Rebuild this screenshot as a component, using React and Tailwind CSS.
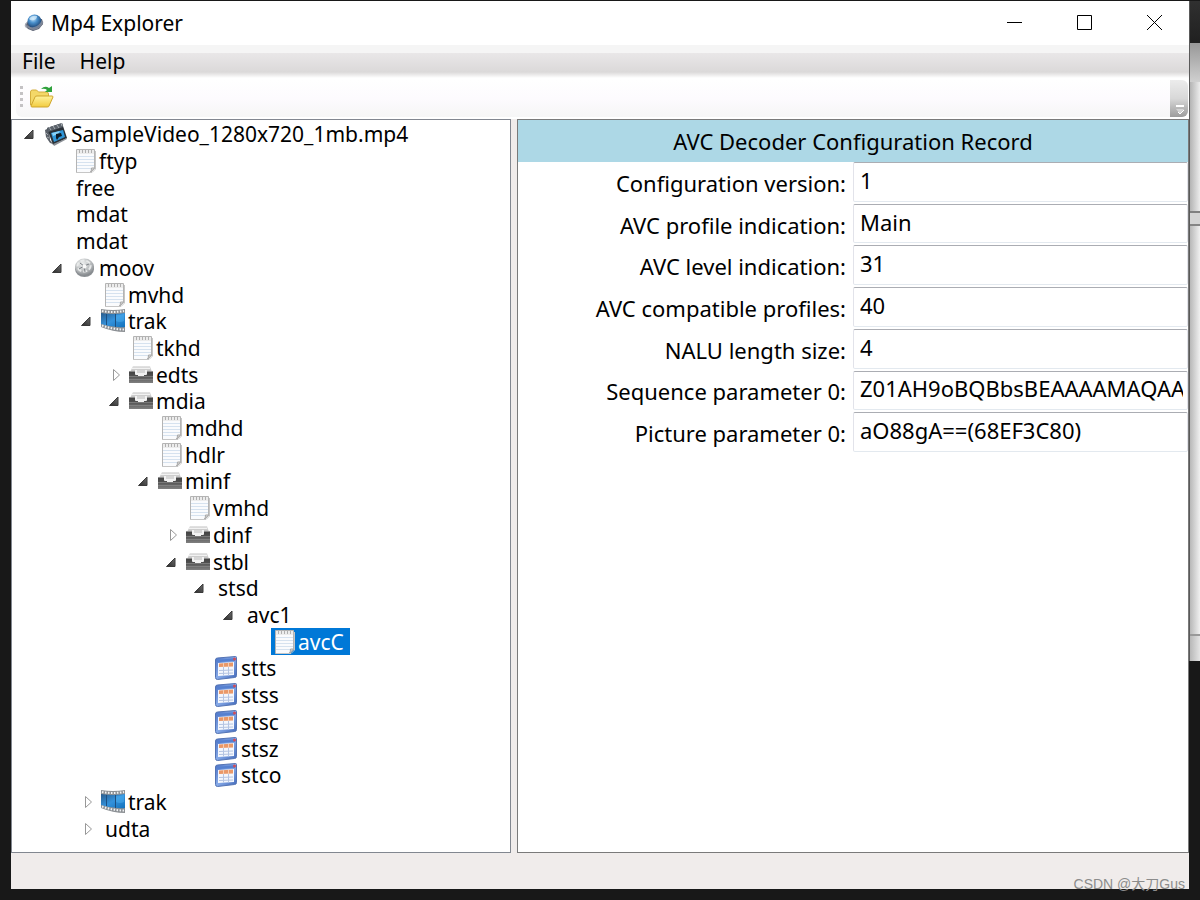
import { useState } from 'react';

const NODES = [
  { id: 'root', label: 'SampleVideo_1280x720_1mb.mp4', depth: 0, icon: 'clip', kids: true, open: true },
  { id: 'ftyp', label: 'ftyp', depth: 1, icon: 'note' },
  { id: 'free', label: 'free', depth: 1 },
  { id: 'mdat1', label: 'mdat', depth: 1 },
  { id: 'mdat2', label: 'mdat', depth: 1 },
  { id: 'moov', label: 'moov', depth: 1, icon: 'reel', kids: true, open: true },
  { id: 'mvhd', label: 'mvhd', depth: 2, icon: 'note' },
  { id: 'trak1', label: 'trak', depth: 2, icon: 'film', kids: true, open: true },
  { id: 'tkhd', label: 'tkhd', depth: 3, icon: 'note' },
  { id: 'edts', label: 'edts', depth: 3, icon: 'drawer', kids: true },
  { id: 'mdia', label: 'mdia', depth: 3, icon: 'drawer', kids: true, open: true },
  { id: 'mdhd', label: 'mdhd', depth: 4, icon: 'note' },
  { id: 'hdlr', label: 'hdlr', depth: 4, icon: 'note' },
  { id: 'minf', label: 'minf', depth: 4, icon: 'drawer', kids: true, open: true },
  { id: 'vmhd', label: 'vmhd', depth: 5, icon: 'note' },
  { id: 'dinf', label: 'dinf', depth: 5, icon: 'drawer', kids: true },
  { id: 'stbl', label: 'stbl', depth: 5, icon: 'drawer', kids: true, open: true },
  { id: 'stsd', label: 'stsd', depth: 6, kids: true, open: true },
  { id: 'avc1', label: 'avc1', depth: 7, kids: true, open: true },
  { id: 'avcC', label: 'avcC', depth: 8, icon: 'note' },
  { id: 'stts', label: 'stts', depth: 6, icon: 'table' },
  { id: 'stss', label: 'stss', depth: 6, icon: 'table' },
  { id: 'stsc', label: 'stsc', depth: 6, icon: 'table' },
  { id: 'stsz', label: 'stsz', depth: 6, icon: 'table' },
  { id: 'stco', label: 'stco', depth: 6, icon: 'table' },
  { id: 'trak2', label: 'trak', depth: 2, icon: 'film', kids: true },
  { id: 'udta', label: 'udta', depth: 2, kids: true },
];

const FIELDS = [
  { id: 'version', label: 'Configuration version:', value: '1' },
  { id: 'profile', label: 'AVC profile indication:', value: 'Main' },
  { id: 'level', label: 'AVC level indication:', value: '31' },
  { id: 'compat', label: 'AVC compatible profiles:', value: '40' },
  { id: 'nalu', label: 'NALU length size:', value: '4' },
  { id: 'sps', label: 'Sequence parameter 0:', value: 'Z01AH9oBQBbsBEAAAAMAQAAADIDxYuS' },
  { id: 'pps', label: 'Picture parameter 0:', value: 'aO88gA==(68EF3C80)' },
];

// gradients shared by all the icons
function IconDefs() {
  return (
    <svg className="absolute w-0 h-0" aria-hidden="true">
      <defs>
        <linearGradient id="gToggle" x1="0" y1="1" x2="1" y2="0">
          <stop offset="0" stopColor="#2c2c2c" /><stop offset="1" stopColor="#6c6c6c" />
        </linearGradient>
        <linearGradient id="gFilm" x1="0" y1="0" x2="1" y2="1">
          <stop offset="0" stopColor="#2a5c8c" /><stop offset="0.5" stopColor="#3492dc" /><stop offset="1" stopColor="#1272bc" />
        </linearGradient>
        <linearGradient id="gDrawer" x1="0" y1="0" x2="0" y2="1">
          <stop offset="0" stopColor="#404040" /><stop offset="0.4" stopColor="#505050" /><stop offset="1" stopColor="#808080" />
        </linearGradient>
        <linearGradient id="gPaper" x1="0" y1="0" x2="0" y2="1">
          <stop offset="0" stopColor="#e4e4e4" /><stop offset="1" stopColor="#bcbcbc" />
        </linearGradient>
        <linearGradient id="gTable" x1="0" y1="0" x2="1" y2="1">
          <stop offset="0" stopColor="#4a70c4" /><stop offset="0.5" stopColor="#86aae8" /><stop offset="1" stopColor="#3f66b8" />
        </linearGradient>
        <radialGradient id="gReel" cx="0.4" cy="0.3" r="0.8">
          <stop offset="0" stopColor="#eef0f0" /><stop offset="0.6" stopColor="#b4b7b9" /><stop offset="1" stopColor="#70757a" />
        </radialGradient>
        <radialGradient id="gGlobe" cx="0.4" cy="0.3" r="0.75">
          <stop offset="0" stopColor="#c4e4fa" /><stop offset="0.4" stopColor="#4a90cc" /><stop offset="1" stopColor="#12305c" />
        </radialGradient>
        <linearGradient id="gFolder" x1="0" y1="0" x2="0" y2="1">
          <stop offset="0" stopColor="#fff29c" /><stop offset="1" stopColor="#f2cc40" />
        </linearGradient>
      </defs>
    </svg>
  );
}

const ICONS = {
  note: (
    <>
      <path d="M4.500 .5h18v19l-4 4h-14z" fill="#fafbfd" stroke="#b4b4b4" />
      <path d="M5 1h17v4H5z" fill="#ececec" />
      <path d="M7.500 1v3M10.500 1v3M13.500 1v3M16.500 1v3M19.500 1v3" stroke="#b0b0b0" />
      <path d="M5 7.500h17M5 10.500h17M5 13.500h17M5 16.500h17M5 19.500h14" stroke="#d6e2ef" />
      <path d="M23.500 2v18l-3.500 3.500H5" fill="none" stroke="#c6c6c6" />
      <path d="M18.500 23q1-1 1-4l3 0z" fill="#dedede" stroke="#a8a8a8" />
    </>
  ),
  film: (
    <>
      <path d="M0 0q12 2 24 0v23q-12 0-24-5z" fill="#8c9094" />
      <path d="M0 4q12 2 24 0v14q-12 1-24-3z" fill="url(#gFilm)" />
      <path d="M1 2q11 2 22 0" fill="none" stroke="#f0f2f4" strokeWidth="2" strokeDasharray="1.500 1.500" />
      <path d="M1 16.500q11 4 22 4" fill="none" stroke="#f0f2f4" strokeWidth="2" strokeDasharray="1.500 1.500" />
      <path d="M5.500 5v11M14.500 5v13" stroke="#1c4f80" />
      <path d="M15 6q5 0 8-1v7q-4 2-8 0z" fill="#4cb0f0" opacity="0.5" />
    </>
  ),
  drawer: (
    <>
      <path d="M4 3h17l2 6H1z" fill="url(#gPaper)" />
      <path d="M3 5.500h18" stroke="#f2f2f2" />
      <path d="M0 8h24v12H0z" fill="url(#gDrawer)" />
      <path d="M0 8.500h24" stroke="#8e8e8e" />
      <path d="M0 13.500h24M0 16.500h24" stroke="#8a8a8a" strokeOpacity="0.7" />
      <path d="M6 7h12v4q0 1-1 1h-2v1H9v-1H7q-1 0-1-1z" fill="#f2f2f2" />
      <path d="M8 7h8v3H8z" fill="#d6d6d6" />
    </>
  ),
  reel: (
    <>
      <ellipse cx="12.500" cy="13" rx="9.500" ry="8" fill="#8a8e92" />
      <ellipse cx="12.500" cy="11" rx="9.500" ry="8.500" fill="url(#gReel)" />
      <ellipse cx="12" cy="10" rx="6.500" ry="5.500" fill="none" stroke="#e8eaea" strokeWidth="2" strokeDasharray="4 2" />
      <path d="M12 10l-4-3M12 10l5-2M12 10l1 6M12 10l-5 3" stroke="#7c8186" />
      <circle cx="12.500" cy="10.500" r="2" fill="#f8f8f8" />
    </>
  ),
  table: (
    <>
      <path d="M1.500 4q0-2 2-2l18-1.500q1 0 1 1v18q0 2-2 2l-17 2q-2 0-2-2z" fill="url(#gTable)" stroke="#5474b4" />
      <path d="M3 4l18-2v3L3 6z" fill="#5580d0" />
      <circle cx="20.500" cy="3" r="1.500" fill="#d04c58" />
      <path d="M4 7l16-1v13l-16 1z" fill="#f4f7fd" />
      <path d="M5 7.500l14-1v4l-14 .5z" fill="#ea9868" />
      <path d="M5 14.500l14-.5M5 17.500l14-.5M9.500 11v8.500M14.500 11v8.500" stroke="#b4c4e2" fill="none" />
      <path d="M9.500 7v4M14.500 7v4" stroke="#f6cdb0" fill="none" />
    </>
  ),
  clip: (
    <>
      <path d="M1 8l4-2 1 12 3 4-3-1-4-6z" fill="#5a6068" />
      <path d="M3 6l15-5 5 15-14 7z" fill="#2a3138" />
      <path d="M3 6l15-5 1 4-15 5z" fill="#5c636b" />
      <path d="M5 5l2 3M9 4l2 3M13 3l2 3M17 1l1 3" stroke="#a8aeb4" />
      <path d="M7 11l12-3 2 7-11 5z" fill="#2f96d8" />
      <path d="M8 11l8-2-2 3-5 2z" fill="#8ad4fa" />
      <path d="M12 12l5-1 1 3-3 1-2 3-1-2z" fill="#0e1c28" />
      <path d="M2 11l2 2M3 15l2 1" stroke="#a2a8ae" />
      <path d="M9 22l14-6v1L10 24z" fill="#8b9096" />
    </>
  ),
};

function NodeIcon({ name }) {
  return <svg viewBox="0 0 24 24" className="w-6 h-6 shrink-0" aria-hidden="true">{ICONS[name]}</svg>;
}

function Toggle({ node, open, onToggle }) {
  return (
    <button type="button" onClick={onToggle} aria-label={`${open ? 'Collapse' : 'Expand'} ${node.label}`} className="w-[22px] h-5 shrink-0 flex items-center">
      {open ? (
        <svg viewBox="0 0 12 12" className="w-3 h-3"><path d="M11 2v8.500H2.500z" fill="url(#gToggle)" stroke="#3a3a3a" /></svg>
      ) : (
        <svg viewBox="0 0 12 14" className="w-3 h-[14px] ml-1"><path d="M2.500 1.500v11L8.500 7z" fill="#fff" stroke="#989898" /></svg>
      )}
    </button>
  );
}

function Tree() {
  const [open, setOpen] = useState(() => new Set(NODES.filter((n) => n.open).map((n) => n.id)));
  const [selected, setSelected] = useState('avcC');

  const toggle = (id) => {
    const next = new Set(open);
    next.has(id) ? next.delete(id) : next.add(id);
    setOpen(next);
  };

  // skip everything below a closed node
  let closedAt = Infinity;
  const rows = NODES.filter((n) => {
    if (n.depth > closedAt) return false;
    closedAt = n.kids && !open.has(n.id) ? n.depth : Infinity;
    return true;
  });

  return (
    <ul className="h-full flex flex-col pt-px pb-[10px] pl-[10px]">
      {rows.map((n) => (
        <li key={n.id} className="flex-1 max-h-[27px] min-h-0 flex items-center" style={{ paddingLeft: Math.round(n.depth * 28.4) }}>
          {n.kids ? <Toggle node={n} open={open.has(n.id)} onToggle={() => toggle(n.id)} /> : <span className="w-[22px] shrink-0" />}
          <button type="button" onClick={() => setSelected(n.id)}
            className={`h-full flex items-center gap-[3px] whitespace-nowrap pr-[6px] ${n.icon ? '' : 'pl-1'} ${selected === n.id ? 'bg-[#0078d7] text-white' : ''}`}>
            {n.icon && <NodeIcon name={n.icon} />}
            <span>{n.label}</span>
          </button>
        </li>
      ))}
    </ul>
  );
}

function TitleBar() {
  return (
    <header className="h-11 shrink-0 bg-white flex items-center pl-3 pb-px">
      <svg viewBox="0 0 22 20" className="w-[22px] h-5 mr-[6px]" aria-hidden="true">
        <ellipse cx="11" cy="11" rx="9.500" ry="5" fill="#a8acb6" transform="rotate(-12 11 11)" />
        <path d="M3 12l3-5 13-1 1 5-4 5-6 2-5-2z" fill="#585f70" />
        <circle cx="11.500" cy="8.500" r="7" fill="url(#gGlobe)" />
        <path d="M6 6q3-4 8-3 0 3-3 4-3 1-5-1z" fill="#d8effc" opacity="0.7" />
        <path d="M2 10q4 5 9 4t8-7l1 3q-3 6-9 7-7 0-9-7z" fill="#8d95a6" opacity="0.75" />
      </svg>
      <h1 className="flex-1">Mp4 Explorer</h1>
      <button type="button" aria-label="Minimize" className="w-[70px] h-full flex items-center justify-center">
        <svg viewBox="0 0 15 15" className="w-[15px] h-[15px]"><path d="M0 7.500h15" stroke="#000" /></svg>
      </button>
      <button type="button" aria-label="Maximize" className="w-[70px] h-full flex items-center justify-center">
        <svg viewBox="0 0 15 15" className="w-[15px] h-[15px]"><path d="M.5 .5h14v14H.5z" fill="none" stroke="#000" /></svg>
      </button>
      <button type="button" aria-label="Close" className="w-[70px] h-full flex items-center justify-center">
        <svg viewBox="0 0 15 15" className="w-[15px] h-[15px]"><path d="M0 0l15 15M15 0L0 15" stroke="#000" /></svg>
      </button>
    </header>
  );
}

function Toolbar() {
  return (
    <div className="h-[41px] shrink-0 bg-white pl-[5px] pr-px pt-[2px] pb-[2px]">
      <div className="h-full rounded-md bg-gradient-to-b from-white via-[#fdfbfe] to-[#f6f6f6] flex items-center">
        <div className="ml-1 mb-1 h-[21px] flex flex-col justify-between">
          {[0, 1, 2, 3].map((i) => <span key={i} className="w-[3px] h-[3px] bg-[#c4c2c4]" />)}
        </div>
        <button type="button" aria-label="Open" className="ml-1 mb-[3px]">
          <svg viewBox="0 0 28 26" className="w-7 h-[26px]">
            <path d="M3.500 21V8q0-2 2-2h4l2 2h8q2 0 2 2v11z" fill="#f4d868" stroke="#d4ae3c" />
            <path d="M4 22l4-9q0-1 2-1h15q1 0 1 1l-4 9q0 1-2 1H5q-1 0-1-1z" fill="url(#gFolder)" stroke="#cfa52c" />
            <path d="M14 5q4-4 8-1l3-2v6h-7l2-2q-2-2-6-1z" fill="#2fa23c" />
          </svg>
        </button>
        <button type="button" aria-label="Toolbar options" className="ml-auto w-[18px] h-full rounded-r-md bg-gradient-to-b from-[#ececec] via-[#d8d8d8] to-[#9c9c9c] flex items-end justify-end pr-[3px] pb-[2px]">
          <svg viewBox="0 0 10 10" className="w-[10px] h-[10px]"><path d="M1 1h8" stroke="#fff" strokeWidth="2" /><path d="M1 4h8L5 9z" fill="#d4d4d4" /><path d="M3 7l2 2 4-4" fill="none" stroke="#fff" /></svg>
        </button>
      </div>
    </div>
  );
}

function RecordPanel() {
  return (
    <section className="flex-1 min-w-0 bg-white border border-[#7a7a7a] text-[22px]">
      <h2 className="h-[42px] bg-[#add8e6] flex items-center justify-center">AVC Decoder Configuration Record</h2>
      <form className="h-[292px] grid grid-cols-1 auto-rows-fr">
        {FIELDS.map((f) => (
          <div key={f.id} className="grid grid-cols-2">
            <label htmlFor={f.id} className="flex items-center justify-end pr-[7px]">{f.label}</label>
            <div className="min-w-0 pb-[2px]">
              <input id={f.id} readOnly defaultValue={f.value}
                className="w-full h-full rounded-xs border border-t-[#abadb3] border-x-[#e2e3ea] border-b-[#e3e9ef] bg-white pl-[6px] pr-1 pb-1 outline-none" />
            </div>
          </div>
        ))}
      </form>
    </section>
  );
}

// sliver of the window lying behind, right of the main one
function BackWindow() {
  return (
    <div className="w-[11px] shrink-0 self-start flex flex-col border-l border-[#5a5a5a]" aria-hidden="true">
      <div className="h-[42px] bg-gradient-to-b from-[#303030] to-[#202020]" />
      <div className="h-[39px] bg-gradient-to-b from-[#989898] to-[#d0d0d0]" />
      <div className="h-[129px] bg-gradient-to-r from-[#b4b4b4] to-[#ececec]" />
      <div className="h-[2px] bg-[#808080]" />
      <div className="h-[11px] bg-[#d4d4d4]" />
      <div className="h-[2px] bg-[#858585]" />
      <div className="h-[408px] bg-gradient-to-r from-[#b8b8b8] to-[#f0f0f0]" />
      <div className="h-[2px] bg-[#999999]" />
      <div className="h-[25px] bg-gradient-to-r from-[#b8b8b8] to-[#e4e4e4]" />
    </div>
  );
}

export default function App() {
  return (
    <div className="relative h-screen flex bg-[#181818] pl-[11px] pt-px overflow-hidden font-['Noto_Sans','Noto_Sans_CJK_SC',sans-serif] text-[21px] leading-[26px] text-black">
      <IconDefs />
      <main className="flex-1 min-w-0 mb-[11px] flex flex-col bg-[#f0eceb]">
        <TitleBar />
        <nav className="h-[33px] shrink-0 flex items-center pl-[11px] pb-[2px] gap-6 bg-[linear-gradient(#f5f5f5_0_8px,#e9e7e8_8px,#dbd9d9_27px,#fff_33px)]">
          <button type="button">File</button>
          <button type="button">Help</button>
        </nav>
        <Toolbar />
        <div className="flex-1 min-h-0 flex gap-[6px]">
          <div className="w-[500px] shrink-0 bg-white border border-[#828790]"><Tree /></div>
          <RecordPanel />
        </div>
        <footer className="h-9 shrink-0" />
      </main>
      <BackWindow />
      <p className="absolute right-[15px] bottom-[6px] font-['Liberation_Sans','Noto_Sans_CJK_SC',sans-serif] text-[14px] leading-5 text-[#8c8c8c]">CSDN @大刀Gus</p>
    </div>
  );
}
